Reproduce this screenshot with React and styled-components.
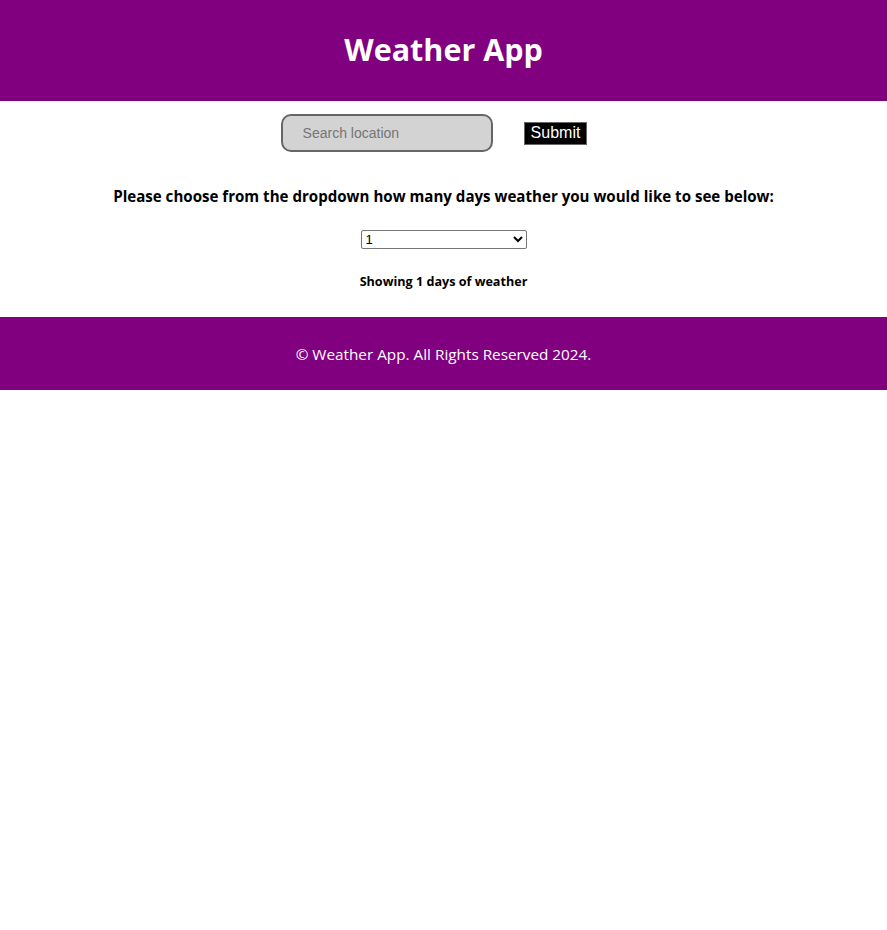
import React, { useState } from "react";
import styled, { createGlobalStyle } from "styled-components";

const GlobalStyle = createGlobalStyle`
    body {
        margin: 0;
        background: #fff;
        font-family: "Open Sans", "Noto Sans", sans-serif;
    }
`;

export default function App() {
    const [days, setDays] = useState("1");
    const [location, setLocation] = useState("");

    return (
        <>
            <GlobalStyle />
            <Header>
                <Title>Weather App</Title>
            </Header>

            <Main>
                <SearchForm onSubmit={(e) => e.preventDefault()}>
                    <SearchInput
                        type="text"
                        placeholder="Search location"
                        value={location}
                        onChange={(e) => setLocation(e.target.value)}
                    />
                    <SubmitButton type="submit">Submit</SubmitButton>
                </SearchForm>

                <Prompt>
                    Please choose from the dropdown how many days weather you
                    would like to see below:
                </Prompt>

                <DaySelect
                    value={days}
                    onChange={(e) => setDays(e.target.value)}
                >
                    {[1, 2, 3, 4, 5, 6, 7].map((n) => (
                        <option key={n} value={n}>
                            {n}
                        </option>
                    ))}
                </DaySelect>

                <Showing>Showing {days} days of weather</Showing>
            </Main>

            <Footer>© Weather App. All Rights Reserved 2024.</Footer>
        </>
    );
}

const Header = styled.header`
    background-color: #800080;
    height: 101px;
    display: flex;
    align-items: center;
    justify-content: center;
`;

const Title = styled.h1`
    margin: 0 0 4px;
    color: #fff;
    font-size: 30.5px;
    font-weight: 700;
`;

const Main = styled.main`
    display: flex;
    flex-direction: column;
    align-items: center;
    padding: 13px 0 27px;
`;

const SearchForm = styled.form`
    display: flex;
    align-items: center;
    gap: 31px;
    margin-right: 19px;
`;

const SearchInput = styled.input`
    box-sizing: border-box;
    width: 212px;
    height: 38px;
    padding: 0 20px;
    background: #d3d3d3;
    border: 2px solid #666;
    border-radius: 10px;
    font-family: "Liberation Sans", Arial, sans-serif;
    font-size: 14px;
    color: #333;
    outline: none;

    &::placeholder {
        color: #757575;
    }
`;

const SubmitButton = styled.button`
    box-sizing: border-box;
    height: 23px;
    padding: 0 6px;
    background: #000;
    color: #fff;
    border: 1px solid #666;
    font-family: "Liberation Sans", Arial, sans-serif;
    font-size: 16px;
    cursor: pointer;
`;

const Prompt = styled.h3`
    margin: 34px 0 0;
    font-size: 15.1px;
    font-weight: 700;
    color: #000;
    text-align: center;
`;

const DaySelect = styled.select`
    box-sizing: border-box;
    margin-top: 24px;
    width: 166px;
    height: 19px;
    font-family: "Liberation Sans", Arial, sans-serif;
    font-size: 13px;
    border: 1px solid #767676;
    border-radius: 2px;
    background: #fff;
`;

const Showing = styled.h5`
    margin: 24px 0 0;
    font-size: 12.6px;
    font-weight: 700;
    color: #000;
`;

const Footer = styled.footer`
    background-color: #800080;
    height: 73px;
    display: flex;
    align-items: center;
    justify-content: center;
    color: #fff;
    font-size: 15.3px;
`;
